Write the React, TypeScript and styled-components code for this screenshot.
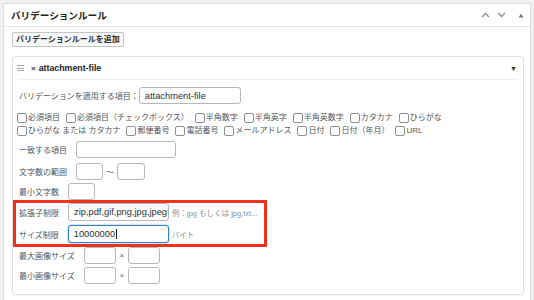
import React from "react";
import styled, { createGlobalStyle } from "styled-components";

const GlobalStyle = createGlobalStyle`
  html, body {
    margin: 0;
    padding: 0;
    background: #f0f0f1;
    font-family: "Liberation Sans", "Noto Sans CJK JP", sans-serif;
    color: #50575e;
  }
`;

const Page = styled.div`
  padding: 3px 3px 0 3px;
  height: 297px;
  overflow: hidden;
`;

const Panel = styled.div`
  background: #fff;
  border: 1px solid #dcdcde;
  border-bottom: none;
  height: 300px;
  box-sizing: border-box;
`;

const PanelHeader = styled.div`
  display: flex;
  align-items: center;
  height: 22px;
  padding: 0 6px 0 7px;
  border-bottom: 1px solid #e6e6e6;
`;

const PanelTitle = styled.h2`
  margin: 0;
  font-size: 9.6px;
  font-weight: 700;
  color: #1d2327;
`;

const HeaderActions = styled.div`
  margin-left: auto;
  display: flex;
  align-items: center;
  gap: 7px;
  color: #8c8f94;
`;

const PanelBody = styled.div`
  padding: 5px 6px 0 8px;
`;

const AddButton = styled.button`
  display: block;
  height: 15px;
  padding: 0 3px;
  border: 1px solid #c3c4c7;
  border-radius: 2px;
  background: #f6f7f7;
  font-family: inherit;
  font-size: 8px;
  font-weight: 700;
  color: #2c3338;
  line-height: 13px;
`;

const Card = styled.div`
  margin-top: 9px;
  border: 1px solid #e0e0e0;
  border-radius: 3px;
  box-shadow: 0 1px 1px rgba(0, 0, 0, 0.04);
`;

const CardHeader = styled.div`
  display: flex;
  align-items: center;
  height: 22px;
  margin: 0 6px;
  border-bottom: 1px solid #eeeeee;
  color: #1d2327;
`;

const Handle = styled.span`
  display: inline-flex;
  flex-direction: column;
  gap: 1.5px;
  width: 7px;
  margin: 0 7px 0 -2px;

  i {
    display: block;
    height: 1px;
    background: #a7aaad;
  }
`;

const Remove = styled.span`
  font-size: 8px;
  font-weight: 700;
  margin-right: 3px;
  color: #3c434a;
`;

const CardTitle = styled.span`
  font-size: 8.8px;
  font-weight: 700;
`;

const Toggle = styled.span`
  margin-left: auto;
  font-size: 7px;
  color: #2c3338;
`;

const CardBody = styled.div`
  padding: 0 6px 10px 6px;
`;

const Row = styled.div<{ $mt?: number }>`
  display: flex;
  align-items: center;
  margin-top: ${(p) => p.$mt ?? 0}px;
`;

const Label = styled.span<{ $tight?: boolean }>`
  font-size: 8px;
  color: #50575e;
  margin-right: ${(p) => (p.$tight ? 0 : 9)}px;
  white-space: nowrap;
`;

const Field = styled.div<{ $w: number; $h?: number; $focus?: boolean }>`
  box-sizing: border-box;
  width: ${(p) => p.$w}px;
  height: ${(p) => p.$h ?? 17}px;
  padding: 0 5px;
  display: flex;
  align-items: center;
  border: 1px solid ${(p) => (p.$focus ? "#3582c4" : "#b4b8bd")};
  border-radius: 3px;
  background: #fff;
  box-shadow: ${(p) => (p.$focus ? "0 0 2px rgba(34, 113, 177, 0.7)" : "none")};
  font-size: 9.3px;
  color: #2c3338;
  white-space: nowrap;
  overflow: hidden;
`;

const Caret = styled.span`
  display: inline-block;
  width: 1px;
  height: 10px;
  background: #1d2327;
  margin-left: 0.5px;
`;

const Between = styled.span<{ $w: number }>`
  width: ${(p) => p.$w}px;
  text-align: center;
  font-size: 8px;
  color: #646970;
`;

const Hint = styled.span`
  margin-left: 3px;
  font-size: 7.5px;
  color: #8c8f94;
  white-space: nowrap;
`;

const CheckGroup = styled.div`
  display: flex;
  flex-wrap: wrap;
  margin: 7px 0 0 -2px;
  column-gap: 6px;
  line-height: 13px;
  width: 440px;
`;

const CheckItem = styled.label`
  display: inline-flex;
  align-items: center;
  font-size: 8px;
  color: #50575e;
  white-space: nowrap;
`;

const Box = styled.span`
  box-sizing: border-box;
  width: 10px;
  height: 10px;
  margin-right: 1px;
  border: 1px solid #8c8f94;
  border-radius: 2px;
  background: #fff;
`;

const Highlight = styled.div`
  box-sizing: border-box;
  width: 254px;
  margin-left: -6px;
  padding: 0 0 1px 3px;
  border: 3px solid #f3311a;
`;

const Chevron = ({ up }: { up?: boolean }) => (
  <svg width="9" height="6" viewBox="0 0 9 6">
    <path
      d={up ? "M1 5 L4.5 1.5 L8 5" : "M1 1 L4.5 4.5 L8 1"}
      fill="none"
      stroke="currentColor"
      strokeWidth="1.3"
    />
  </svg>
);

const checks = [
  "必須項目",
  "必須項目（チェックボックス）",
  "半角数字",
  "半角英字",
  "半角英数字",
  "カタカナ",
  "ひらがな",
  "ひらがな または カタカナ",
  "郵便番号",
  "電話番号",
  "メールアドレス",
  "日付",
  "日付（年月）",
  "URL",
];

export default function App() {
  return (
    <>
      <GlobalStyle />
      <Page>
        <Panel>
          <PanelHeader>
            <PanelTitle>バリデーションルール</PanelTitle>
            <HeaderActions>
              <Chevron up />
              <Chevron />
              <svg width="6" height="5" viewBox="0 0 6 5" style={{ marginLeft: 5 }}>
                <path d="M3 0.5 L5.5 4.5 L0.5 4.5 Z" fill="#787c82" />
              </svg>
            </HeaderActions>
          </PanelHeader>
          <PanelBody>
            <AddButton>バリデーションルールを追加</AddButton>
            <Card>
              <CardHeader>
                <Handle>
                  <i />
                  <i />
                  <i />
                </Handle>
                <Remove>×</Remove>
                <CardTitle>attachment-file</CardTitle>
                <Toggle>▼</Toggle>
              </CardHeader>
              <CardBody>
                <Row $mt={7}>
                  <Label $tight>バリデーションを適用する項目：</Label>
                  <Field $w={102}>attachment-file</Field>
                </Row>
                <CheckGroup>
                  {checks.map((c, i) => (
                    <CheckItem key={i}>
                      <Box />
                      {c}
                    </CheckItem>
                  ))}
                </CheckGroup>
                <Row $mt={4}>
                  <Label>一致する項目</Label>
                  <Field $w={100} />
                </Row>
                <Row $mt={5}>
                  <Label>文字数の範囲</Label>
                  <Field $w={27} />
                  <Between $w={14}>〜</Between>
                  <Field $w={28} />
                </Row>
                <Row $mt={3}>
                  <Label>最小文字数</Label>
                  <Field $w={27} />
                </Row>
                <Highlight>
                  <Row>
                    <Label>拡張子制限</Label>
                    <Field $w={101} $h={18}>
                      zip,pdf,gif,png,jpg,jpeg
                    </Field>
                    <Hint>例：jpg もしくは jpg,txt...</Hint>
                  </Row>
                  <Row $mt={4}>
                    <Label>サイズ制限</Label>
                    <Field $w={101} $h={18} $focus>
                      10000000
                      <Caret />
                    </Field>
                    <Hint>バイト</Hint>
                  </Row>
                </Highlight>
                <Row>
                  <Label>最大画像サイズ</Label>
                  <Field $w={32} />
                  <Between $w={12}>×</Between>
                  <Field $w={32} />
                </Row>
                <Row $mt={3}>
                  <Label>最小画像サイズ</Label>
                  <Field $w={32} />
                  <Between $w={12}>×</Between>
                  <Field $w={32} />
                </Row>
              </CardBody>
            </Card>
          </PanelBody>
        </Panel>
      </Page>
    </>
  );
}
